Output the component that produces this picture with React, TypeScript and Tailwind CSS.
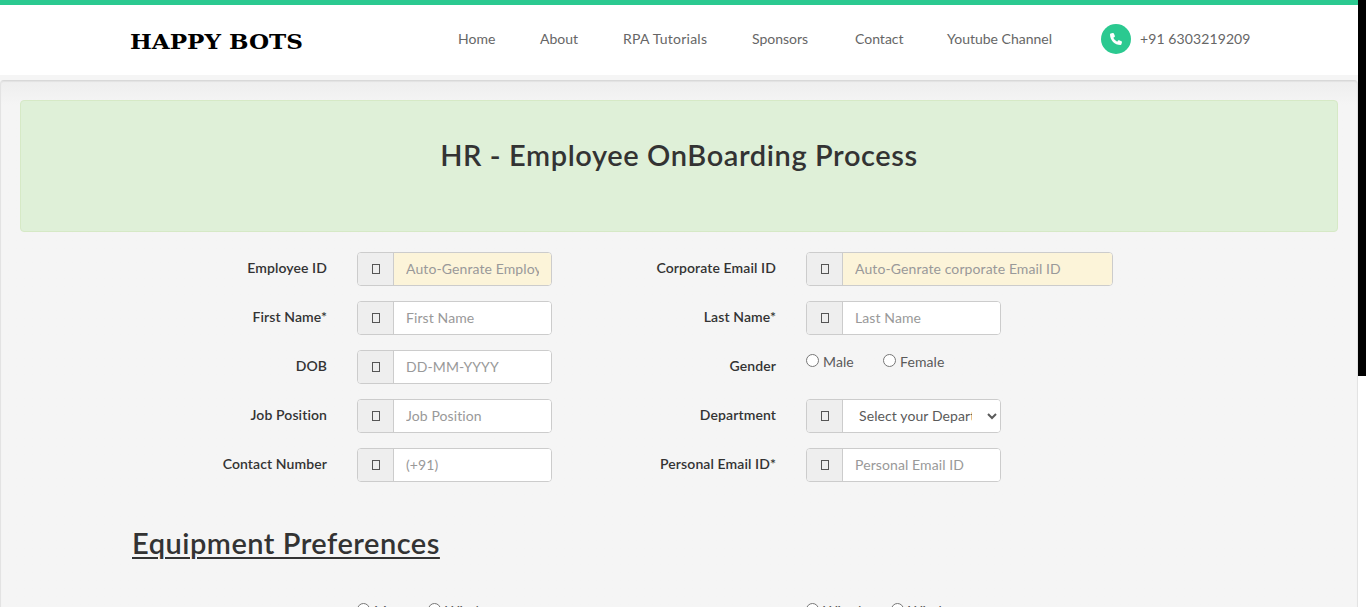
import type { ReactNode } from "react";

const nav = [
  { label: "Home", cls: "w-[82px] tracking-[0px]" },
  { label: "About", cls: "w-[83px] tracking-[0px]" },
  { label: "RPA Tutorials", cls: "w-[129px] tracking-[0.25px]" },
  { label: "Sponsors", cls: "w-[103px] tracking-[0px]" },
  { label: "Contact", cls: "w-[92px] tracking-[0px]" },
  { label: "Youtube Channel", cls: "w-[154px] tracking-[0px]" },
];

function Addon() {
  return (
    <span className="flex h-full w-[36px] shrink-0 items-center justify-center border-r border-[#ccc] bg-[#eee]">
      <span className="h-[10px] w-[8px] border border-[#555]" />
    </span>
  );
}

function Group({ wide, children }: { wide?: boolean; children: ReactNode }) {
  return (
    <div className={(wide ? "w-[307px]" : "w-[195px]") + " flex h-[34px] overflow-hidden rounded-[4px] border border-[#ccc] bg-white"}>
      <Addon />
      {children}
    </div>
  );
}

function Field({ placeholder, auto, wide }: { placeholder: string; auto?: boolean; wide?: boolean }) {
  return (
    <Group wide={wide}>
      <input
        placeholder={placeholder}
        className={(auto ? "bg-[#fcf4d9]" : "bg-white") + " min-w-0 flex-1 px-3 pb-px text-sm tracking-[0.1px] outline-none placeholder:text-[#999]"}
      />
    </Group>
  );
}

function Row({ label, children }: { label: string; children: ReactNode }) {
  return (
    <div className="flex h-[34px]">
      <label className="w-[195px] shrink-0 pt-[6px] text-right text-sm leading-5 font-semibold tracking-[0.1px] text-[#333]">{label}</label>
      <div className="ml-[30px]">{children}</div>
    </div>
  );
}

function Radio({ label, name, className }: { label: string; name: string; className: string }) {
  return (
    <label className={className + " flex shrink-0 items-start text-[#5a5a5a]"}>
      <input type="radio" name={name} className="mt-1 mr-1 size-[13px] shrink-0" />
      <span className="pt-[2px] text-sm leading-5 tracking-[0.1px]">{label}</span>
    </label>
  );
}

export default function App() {
  return (
    <div className="flex h-[607px] w-[1366px] overflow-hidden bg-white font-['Lato',sans-serif] text-sm">
      <div className="flex w-[1358px] shrink-0 flex-col bg-[#f5f5f5]">
        <header className="flex h-[75px] shrink-0 border-t-[5px] border-[#2bc990] bg-white pl-[130px]">
          <div className="w-[328px] pt-[26px]">
            <div className="w-max origin-left scale-x-[1.155] font-['DejaVu_Serif',serif] text-[20px] leading-[22px] font-bold text-black">HAPPY BOTS</div>
          </div>
          <nav className="flex pt-[24px] leading-5 whitespace-nowrap text-[#666]">
            {nav.map((n) => (
              <a key={n.label} className={n.cls}>{n.label}</a>
            ))}
          </nav>
          <div className="flex pt-[19px]">
            <span className="flex size-[30px] items-center justify-center rounded-full bg-[#2bc990]">
              <svg viewBox="0 0 512 512" className="size-3 fill-white">
                <path d="M164.900 24.600c-7.700-18.600-28-28.500-47.400-23.200l-88 24C12.100 30.200 0 46 0 64c0 247.400 200.600 448 448 448 18 0 33.800-12.100 38.600-29.500l24-88c5.300-19.400-4.600-39.700-23.200-47.400l-96-40c-16.300-6.800-35.200-2.100-46.300 11.600L304.700 368C234.300 334.700 177.300 277.700 144 207.300L193.300 167c13.700-11.200 18.400-30 11.600-46.300l-40-96z" />
              </svg>
            </span>
            <span className="ml-[9px] pt-[5px] leading-5 tracking-[0.1px] text-[#666]">+91 6303219209</span>
          </div>
        </header>
        <main className="mt-[5px] flex h-[700px] shrink-0 flex-col rounded-[4px] border border-[#e3e3e3] border-t-[#d8d8d8] bg-[#f5f5f5] bg-linear-to-b from-[#eeeeee] to-[#f5f5f5] to-[24px] px-[19px] pt-[19px] shadow-[inset_0_1px_1px_rgba(0,0,0,0.05)]">
          <div className="h-[132px] rounded-[4px] border border-[#d6e9c6] bg-[#dff0d8] pt-[36px] text-center">
            <h1 className="text-[29px] leading-[36px] font-semibold tracking-[0.6px] text-[#333]">HR - Employee OnBoarding Process</h1>
          </div>
          <div className="mt-5 ml-[112px] flex">
            <div className="flex w-[449px] flex-col gap-[15px]">
              <Row label="Employee ID"><Field placeholder="Auto-Genrate Employee ID" auto /></Row>
              <Row label="First Name*"><Field placeholder="First Name" /></Row>
              <Row label="DOB"><Field placeholder="DD-MM-YYYY" /></Row>
              <Row label="Job Position"><Field placeholder="Job Position" /></Row>
              <Row label="Contact Number"><Field placeholder="(+91)" /></Row>
            </div>
            <div className="flex flex-col gap-[15px]">
              <Row label="Corporate Email ID"><Field placeholder="Auto-Genrate corporate Email ID" auto wide /></Row>
              <Row label="Last Name*"><Field placeholder="Last Name" /></Row>
              <Row label="Gender">
                <div className="flex">
                  <Radio name="gender" label="Male" className="w-[77px]" />
                  <Radio name="gender" label="Female" className="w-[90px]" />
                </div>
              </Row>
              <Row label="Department">
                <Group>
                  <select className="min-w-0 flex-1 bg-white px-3 pb-px text-sm tracking-[0.1px] text-[#5a5a5a] outline-none">
                    <option>Select your Department</option>
                  </select>
                </Group>
              </Row>
              <Row label="Personal Email ID*"><Field placeholder="Personal Email ID" /></Row>
            </div>
          </div>
          <h2 className="mt-[43px] ml-[112px] text-[29px] leading-[36px] font-semibold tracking-[0.5px] text-[#333] underline decoration-2 underline-offset-[3px]">Equipment Preferences</h2>
          <div className="mt-[38px] ml-[337px] flex">
            <Radio name="os" label="Mac" className="w-[71px]" />
            <Radio name="os" label="Windows" className="w-[378px]" />
            <Radio name="mouse" label="Wired" className="w-[85px]" />
            <Radio name="mouse" label="Wireless" className="w-[100px]" />
          </div>
        </main>
      </div>
      <div className="h-[376px] w-2 bg-black" />
    </div>
  );
}
